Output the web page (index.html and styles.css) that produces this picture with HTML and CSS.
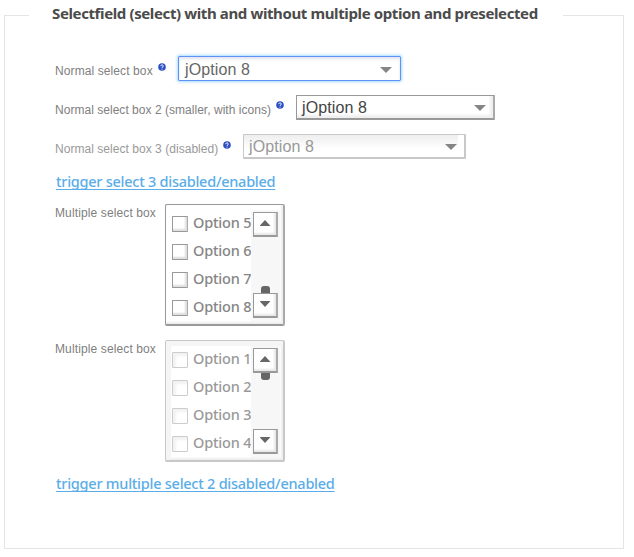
FILE: index.html
```html
<!DOCTYPE html>
<html lang="en">
<head>
<meta charset="utf-8">
<title>Selectfield</title>
<link rel="stylesheet" href="styles.css">
</head>
<body>
<fieldset class="panel">
  <legend class="legend"><span class="title">Selectfield (select) with and without multiple option and preselected</span></legend>
  <div class="content">
    <div class="row first">
      <span class="label">Normal select box</span>
      <svg class="help" viewBox="0 0 8 8"><circle cx="4" cy="4" r="3.8" fill="#2d4fc4"/><path d="M2.7 3.1C2.8 1.5 5.4 1.6 5.3 3.1C5.2 4 4 3.9 4 4.9M4 5.7V6.6" fill="none" stroke="#fff" stroke-width="1"/></svg>
      <div class="select focused"><span class="value">jOption 8</span><i class="arrow"></i></div>
    </div>
    <div class="row second">
      <span class="label">Normal select box 2 (smaller, with icons)</span>
      <svg class="help" viewBox="0 0 8 8"><circle cx="4" cy="4" r="3.8" fill="#2d4fc4"/><path d="M2.7 3.1C2.8 1.5 5.4 1.6 5.3 3.1C5.2 4 4 3.9 4 4.9M4 5.7V6.6" fill="none" stroke="#fff" stroke-width="1"/></svg>
      <div class="select small"><span class="value">jOption 8</span><i class="arrow"></i></div>
    </div>
    <div class="row third">
      <span class="label">Normal select box 3 (disabled)</span>
      <svg class="help" viewBox="0 0 8 8"><circle cx="4" cy="4" r="3.8" fill="#2d4fc4"/><path d="M2.7 3.1C2.8 1.5 5.4 1.6 5.3 3.1C5.2 4 4 3.9 4 4.9M4 5.7V6.6" fill="none" stroke="#fff" stroke-width="1"/></svg>
      <div class="select disabled"><span class="value">jOption 8</span><i class="arrow"></i></div>
    </div>
    <a class="trigger one"><span>trigger select 3 disabled/enabled</span></a>
    <div class="multi-row">
      <span class="label">Multiple select box</span>
      <div class="multi">
        <ul class="options">
          <li><i class="check"></i><span>Option 5</span></li>
          <li><i class="check"></i><span>Option 6</span></li>
          <li><i class="check"></i><span>Option 7</span></li>
          <li><i class="check"></i><span>Option 8</span></li>
        </ul>
        <div class="track">
          <div class="btn"><i class="up"></i></div>
          <div class="thumb low"></div>
          <div class="btn"><i class="down"></i></div>
        </div>
      </div>
    </div>
    <div class="multi-row">
      <span class="label">Multiple select box</span>
      <div class="multi off">
        <ul class="options">
          <li><i class="check"></i><span>Option 1</span></li>
          <li><i class="check"></i><span>Option 2</span></li>
          <li><i class="check"></i><span>Option 3</span></li>
          <li><i class="check"></i><span>Option 4</span></li>
        </ul>
        <div class="track">
          <div class="btn"><i class="up"></i></div>
          <div class="thumb high"></div>
          <div class="btn"><i class="down"></i></div>
        </div>
      </div>
    </div>
    <a class="trigger two"><span>trigger multiple select 2 disabled/enabled</span></a>
  </div>
</fieldset>
</body>
</html>
```
FILE: styles.css
```css
* { box-sizing: border-box; }
body { margin: 0; background: #fff; font-family: "Liberation Sans", Arial, sans-serif; }
.panel {
  width: 620px;
  height: 545px;
  margin: 4px 0 0 4px;
  padding: 0;
  border: 1px solid #e4e4e4;
}
.legend {
  display: block;
  width: 534px;
  height: 23px;
  margin-left: 24px;
  padding: 0 0 0 23px;
  white-space: nowrap;
  font: 700 15px/19px "Noto Sans", sans-serif;
  letter-spacing: -0.38px;
  color: #4b4b4b;
}
.content { padding: 29px 0 0 51px; }
.row { display: flex; height: 25px; margin-bottom: 14px; align-items: flex-start; }
.label {
  flex: none;
  white-space: nowrap;
  font-size: 12px;
  line-height: 14px;
  color: #808080;
}
.row .label, .multi-row .label { margin-left: -1px; }
.row .label { padding-top: 8px; }
.first .label { width: 103px; letter-spacing: 0.1px; }
.second .label { width: 221px; letter-spacing: 0.03px; }
.third .label { width: 168px; letter-spacing: 0.04px; color: #999; }
.help { flex: none; width: 8px; height: 8px; margin: 7px 12px 0 0; }
.second .help { margin-top: 6px; }
.third .help { margin-top: 7px; }
.select {
  display: flex;
  justify-content: space-between;
  width: 223px;
  height: 25px;
  padding: 0 7px 0 5px;
  border: 1px solid #999;
  border-right: 2px solid #aaa;
  border-bottom: 2px solid #999;
  border-radius: 1px;
  color: #444;
  font-size: 16px;
  line-height: 24px;
  letter-spacing: 0.1px;
  box-shadow: inset -3px -3px 3px #eee;
}
.select.small { width: 199px; }
.select.focused {
  padding: 0 8px 0 6px;
  border: 1px solid #5f92f5;
  color: #666;
  line-height: 25px;
  box-shadow: 0 0 3px 1px #a8dcff, inset 0 2px 3px #e2e2ee;
}
.select.disabled {
  border-color: #c8c8c8;
  color: #999;
  background: linear-gradient(#eee, #fff 65%);
  box-shadow: inset -6px 0 0 #fff;
}
.arrow {
  width: 12px;
  height: 6px;
  margin-top: 9px;
  background: #858585;
  clip-path: polygon(0 0, 100% 0, 50% 100%);
}
.focused .arrow { margin-top: 10px; }
.trigger {
  display: block;
  height: 20px;
  white-space: nowrap;
  font: 500 14.5px/20px "Noto Sans", sans-serif;
  color: #5aade8;
  text-decoration: underline;
  text-underline-offset: 2px;
  text-decoration-skip-ink: none;
}
.one { margin: -2px 0 13px; letter-spacing: -0.26px; }
.two { margin-top: -3px; letter-spacing: -0.25px; }
.multi-row { display: flex; height: 122px; margin-bottom: 14px; }
.multi-row .label { width: 110px; padding-top: 2px; letter-spacing: 0.12px; }
.multi {
  display: flex;
  width: 120px;
  height: 122px;
  padding: 5px 3px 3px 6px;
  border: 1px solid #999;
  border-right: 2px solid #aaa;
  border-bottom: 2px solid #999;
  border-radius: 2px;
  box-shadow: inset -2px -2px 2px #eee;
}
.options { width: 79px; margin: 0; padding: 0; list-style: none; }
.options li { display: flex; height: 28px; white-space: nowrap; }
.options span {
  padding-left: 5px;
  font: 500 14.5px/25px "Noto Sans", sans-serif;
  letter-spacing: -0.2px;
  color: #858585;
}
.check {
  flex: none;
  width: 16px;
  height: 16px;
  margin-top: 6px;
  border: 1px solid #999;
  border-right-color: #aaa;
  border-radius: 1px;
  box-shadow: inset -2px -2px 2px #ddd;
}
.track {
  display: flex;
  flex-direction: column;
  align-items: center;
  width: 30px;
  height: 112px;
  padding: 2px 2px 4px;
  background: #f7f7f7;
}
.btn {
  display: flex;
  flex: none;
  justify-content: center;
  width: 25px;
  height: 25px;
  padding-top: 7px;
  border: 1px solid #999;
  border-right: 2px solid #aaa;
  border-bottom: 2px solid #999;
  border-radius: 1px;
  background: #fff;
  box-shadow: inset -2px -2px 2px #e8e8e8;
}
.up, .down { width: 11px; height: 6px; background: #666; }
.up { clip-path: polygon(50% 0, 100% 100%, 0 100%); }
.down { clip-path: polygon(0 0, 100% 0, 50% 100%); }
.thumb { width: 9px; height: 7px; background: #666; }
.low { margin-top: auto; border-radius: 3px 3px 0 0; }
.high { margin-bottom: auto; border-radius: 0 0 3px 3px; }
.off { border-color: #c8c8c8; box-shadow: inset 5px 5px 0 #f5f5f5, inset -2px -2px 2px #eee; }
.off .check { border-color: #ccc; box-shadow: inset 3px 3px 3px #f2f2f2; }
.off .options span { color: #999; }
```
